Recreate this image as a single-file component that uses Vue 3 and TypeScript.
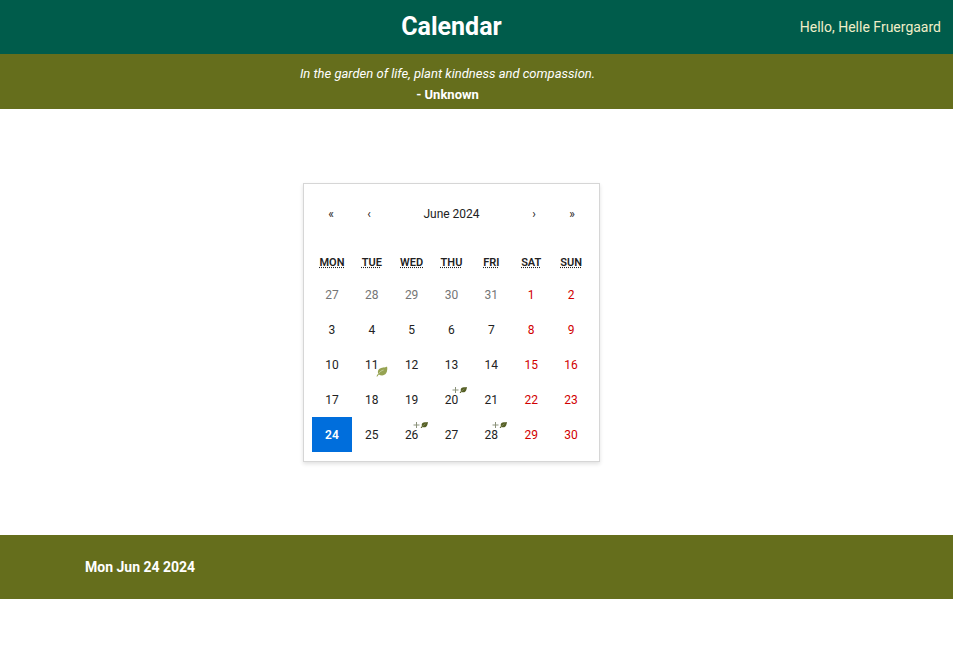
<script setup lang="ts">
import { ref } from 'vue'

interface Day {
  key: string
  label: number
  outside: boolean
  weekend: boolean
  marker: 'leaf' | 'plus' | null
}

const weekdays = [
  { short: 'Mon', full: 'Monday' },
  { short: 'Tue', full: 'Tuesday' },
  { short: 'Wed', full: 'Wednesday' },
  { short: 'Thu', full: 'Thursday' },
  { short: 'Fri', full: 'Friday' },
  { short: 'Sat', full: 'Saturday' },
  { short: 'Sun', full: 'Sunday' },
]

const markers: Record<string, 'leaf' | 'plus'> = {
  'Tue Jun 11 2024': 'leaf',
  'Thu Jun 20 2024': 'plus',
  'Wed Jun 26 2024': 'plus',
  'Fri Jun 28 2024': 'plus',
}

// Five weeks, beginning on the Monday before the first of June
const days: Day[] = Array.from({ length: 35 }, (_, i) => {
  const date = new Date(2024, 4, 27 + i)
  const key = date.toDateString()
  return {
    key,
    label: date.getDate(),
    outside: date.getMonth() !== 5,
    weekend: i % 7 > 4,
    marker: markers[key] ?? null,
  }
})

const selected = ref(new Date(2024, 5, 24).toDateString())
</script>

<template>
  <div class="page">
    <header class="top">
      <h1>Calendar</h1>
      <p class="hello">Hello, Helle Fruergaard</p>
    </header>

    <section class="quote">
      <p class="words">In the garden of life, plant kindness and compassion.</p>
      <p class="author">- Unknown</p>
    </section>

    <main class="content">
      <div class="calendar">
        <nav class="navigation">
          <button type="button">«</button>
          <button type="button">‹</button>
          <button type="button" class="month">June 2024</button>
          <button type="button">›</button>
          <button type="button">»</button>
        </nav>
        <div class="weekdays">
          <div v-for="d in weekdays" :key="d.short" class="weekday">
            <abbr :title="d.full">{{ d.short }}</abbr>
          </div>
        </div>
        <div class="days">
          <button
            v-for="d in days"
            :key="d.key"
            type="button"
            class="day"
            :class="{ weekend: d.weekend, outside: d.outside, selected: d.key === selected }"
            @click="selected = d.key"
          >
            {{ d.label }}
            <svg v-if="d.marker === 'leaf'" class="leaf" viewBox="0 0 12 11" aria-hidden="true">
              <path d="M11 .5C8.800 2 5.500 1 3.200 3C1.800 4.300 1.600 6.300 2.200 7.700C1.300 8.500 .7 9.400 .5 10.400H1.400C1.700 9.600 2.200 8.900 2.800 8.400C5.200 10 8.500 9.700 10.100 7.300C11.400 5.200 11.600 2.500 11 .5Z" fill="#96a352" />
              <path d="M2.600 7.700C4 5.500 5.500 4.600 7.600 4" fill="none" stroke="#d3dab3" stroke-width=".7" />
            </svg>
            <svg v-if="d.marker === 'plus'" class="plus" viewBox="0 0 15 8" aria-hidden="true">
              <path d="M3.500 1V7M.5 4H6.500" fill="none" stroke="#8b927a" stroke-width="1" />
              <path d="M14.900 .9C13 1.300 10.700 .9 9.500 2.100C8.600 3 8.600 4.200 8.900 5.100L7.600 6.900H8.700L9.600 6C11.300 6.700 13.300 6.300 14.100 4.500C14.600 3.200 14.900 2 14.900 .9Z" fill="#555f25" />
              <path d="M9 5.600L12.500 2.800" stroke="#a5aa83" stroke-width=".5" />
            </svg>
          </button>
        </div>
      </div>
    </main>

    <section class="chosen">
      <h2>{{ selected }}</h2>
    </section>
  </div>
</template>

<style>
body {
  margin: 0;
  background: #fff;
}
</style>

<style scoped>
.page {
  font-family: Roboto, "Open Sans", sans-serif;
  color: #222;
}

h1,
h2,
p {
  margin: 0;
}

.top {
  display: grid;
  grid-template-columns: 1fr auto 1fr;
  align-items: center;
  height: 54px;
  background: #005c4b;
}

.top h1 {
  grid-column: 2;
  margin-right: 50px;
  color: #fff;
  font-size: 25px;
  line-height: 32px;
  font-weight: 700;
}

.hello {
  justify-self: end;
  padding-right: 12px;
  color: #f0eec8;
  font-size: 14px;
  line-height: 20px;
  white-space: nowrap;
}

.quote {
  padding: 10px 58px 4px 0;
  background: #656e1c;
  color: #fff;
  font-size: 13px;
  line-height: 20px;
  text-align: center;
}

.words {
  font-style: italic;
}

.author {
  padding-top: 1px;
  font-weight: 700;
}

.content {
  display: flex;
  justify-content: center;
  padding: 74px 50px 73px 0;
}

.calendar {
  box-sizing: border-box;
  width: 297px;
  padding: 8px 8px 9px;
  border: 1px solid #d6d6d6;
  background: #fff;
  box-shadow: 0 2px 4px rgba(0, 0, 0, 0.12);
}

.calendar button {
  padding: 0;
  border: 0;
  background: none;
  color: inherit;
  font-family: inherit;
  cursor: pointer;
}

.navigation {
  display: flex;
  height: 44px;
  margin-bottom: 12px;
}

.navigation button {
  width: 38px;
  font-size: 12px;
}

.navigation .month {
  flex: 1;
}

.weekdays,
.days {
  display: grid;
  grid-template-columns: repeat(7, 1fr);
}

.weekday {
  height: 29px;
  font-size: 11px;
  line-height: 29px;
  font-weight: 600;
  text-align: center;
  text-transform: uppercase;
}

.weekday abbr {
  text-decoration: underline dotted;
}

.calendar .day {
  position: relative;
  height: 35px;
  font-size: 12px;
}

.calendar .weekend {
  color: #d10000;
}

.calendar .outside {
  color: #757575;
}

.calendar .selected {
  background: #006edc;
  color: #fff;
  font-weight: 600;
}

.leaf {
  position: absolute;
  right: 4px;
  bottom: 5px;
  width: 12px;
  height: 11px;
}

.plus {
  position: absolute;
  top: 4px;
  right: 4px;
  width: 15px;
  height: 8px;
}

.chosen {
  padding: 20px 85px;
  background: #656e1c;
  color: #fff;
}

.chosen h2 {
  font-size: 14px;
  line-height: 24px;
  font-weight: 700;
}
</style>
